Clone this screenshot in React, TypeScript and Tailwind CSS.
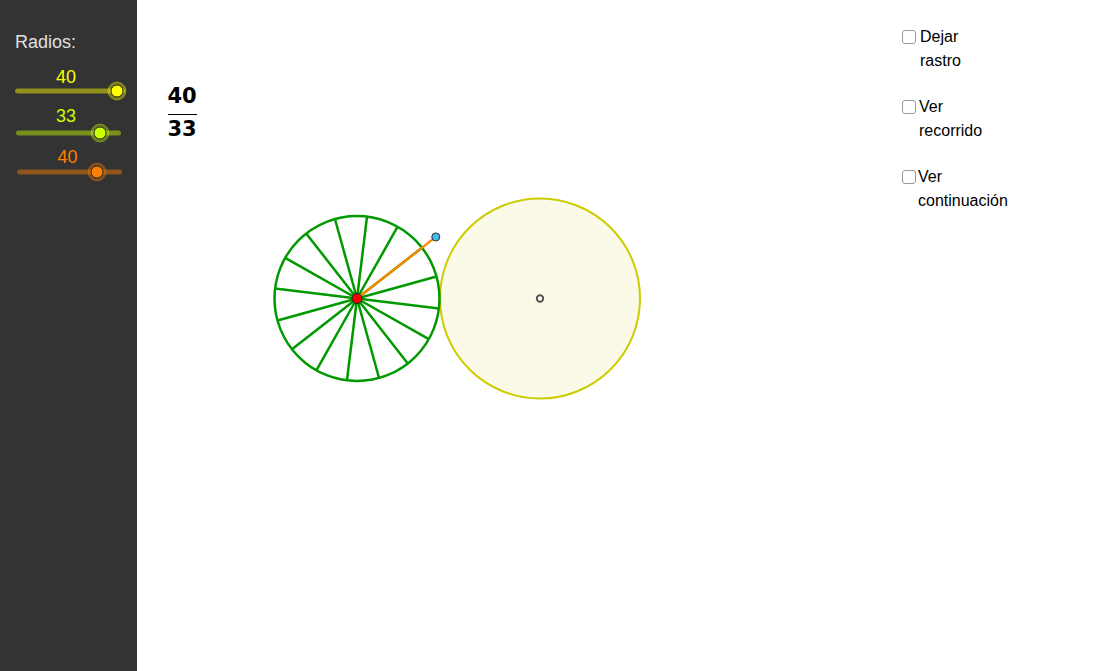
import React from "react";

const CX = 357;
const CY = 298.5;
const R_SMALL = 82.5;
const R_BIG = 100;

// sliders in the left panel
const sliders = [
    { value: "40", color: "#ffff00", textCls: "text-[#ffff00]", x1: 17.5, x2: 122.5, thumb: 117, labelW: "w-[132px]", mt: "mt-[-6.5px]", gap: "mt-[0px]" },
    { value: "33", color: "#ccff00", textCls: "text-[#ccff00]", x1: 18.5, x2: 118.5, thumb: 100, labelW: "w-[132px]", mt: "mt-[-3.5px]", gap: "mt-[4.5px]" },
    { value: "40", color: "#ff8000", textCls: "text-[#ff8000]", x1: 19.5, x2: 119.5, thumb: 97, labelW: "w-[135px]", mt: "mt-[-5.5px]", gap: "mt-[3.5px]" },
];

const checks = [
    { a: "Dejar", b: "rastro", pl: "pl-[4px]" },
    { a: "Ver", b: "recorrido", pl: "pl-[3px]" },
    { a: "Ver", b: "continuación", pl: "pl-[2px]" },
];

function Slider({ s }: { s: (typeof sliders)[number] }) {
    return (
        <div className={s.gap}>
            <div className={`${s.labelW} text-center text-[18px] leading-[21px] ${s.textCls}`}>{s.value}</div>
            <svg width={137} height={20} className={`block ${s.mt}`}>
                <line x1={s.x1} y1={10} x2={s.x2} y2={10} stroke={s.color} strokeOpacity={0.45} strokeWidth={5} strokeLinecap="round" />
                <circle cx={s.thumb} cy={10} r={9} fill={s.color} fillOpacity={0.35} stroke={s.color} strokeOpacity={0.35} strokeWidth={1} />
                <circle cx={s.thumb} cy={10} r={6} fill={s.color} stroke="#2a2a2a" strokeWidth={1} />
            </svg>
        </div>
    );
}

export default function App() {
    const spokes = Array.from({ length: 16 }, (_, k) => {
        const a = ((83 - k * 22.5) * Math.PI) / 180;
        return { x: CX + R_SMALL * Math.cos(a), y: CY - R_SMALL * Math.sin(a) };
    });
    const oa = (38 * Math.PI) / 180;
    const bx = CX + R_BIG * Math.cos(oa);
    const by = CY - R_BIG * Math.sin(oa);

    return (
        <div className="flex h-screen w-full overflow-hidden bg-white font-['Liberation_Sans',Arial,sans-serif]">
            {/* left panel */}
            <div className="flex w-[137px] shrink-0 flex-col bg-[#333333]">
                <div className="pl-[15px] pt-[31.5px] text-[18px] leading-[21px] text-[#e0e0e0]">Radios:</div>
                <div className="mt-[14px]">
                    {sliders.map((s, i) => (
                        <Slider key={i} s={s} />
                    ))}
                </div>
            </div>

            {/* drawing canvas */}
            <div className="relative flex-1">
                <svg width={958} height={671} viewBox="137 0 958 671" className="absolute left-0 top-0">
                    <circle cx={540} cy={CY} r={R_BIG} fill="#fbfae8" stroke="#cccc00" strokeWidth={2} />
                    <circle cx={540} cy={CY} r={3.2} fill="#ffffff" stroke="#555555" strokeWidth={2} />
                    {spokes.map((p, i) => (
                        <line key={i} x1={CX} y1={CY} x2={p.x} y2={p.y} stroke="#009900" strokeWidth={2.5} />
                    ))}
                    <circle cx={CX} cy={CY} r={R_SMALL} fill="none" stroke="#009900" strokeWidth={2.5} />
                    <line x1={CX} y1={CY} x2={bx} y2={by} stroke="#ff8800" strokeWidth={2.3} />
                    <circle cx={bx} cy={by} r={4} fill="#44bbee" stroke="#333333" strokeWidth={1} />
                    <circle cx={CX} cy={CY} r={5} fill="#ff0000" stroke="#222222" strokeWidth={1} />
                </svg>

                {/* ratio */}
                <div className="absolute left-[30px] top-[85.5px] flex w-[30px] flex-col items-center font-['DejaVu_Sans',sans-serif] text-[21px] font-bold leading-[21px] text-black">
                    <span>40</span>
                    <div className="mt-[7.5px] h-[1.2px] w-[29px] bg-black" />
                    <span className="mt-[3.5px]">33</span>
                </div>

                {/* options */}
                <div className="absolute left-[765px] top-[24.5px] flex flex-col gap-[22px] text-[16px] leading-[24px] text-black">
                    {checks.map((c, i) => (
                        <div key={i} className="flex items-start">
                            <div className="mt-[5.5px] h-[14px] w-[14px] rounded-[3px] border-[1.5px] border-[#9a9a9a] bg-white" />
                            <div className={`flex flex-col ${c.pl}`}>
                                <span>{c.a}</span>
                                <span>{c.b}</span>
                            </div>
                        </div>
                    ))}
                </div>
            </div>
        </div>
    );
}
